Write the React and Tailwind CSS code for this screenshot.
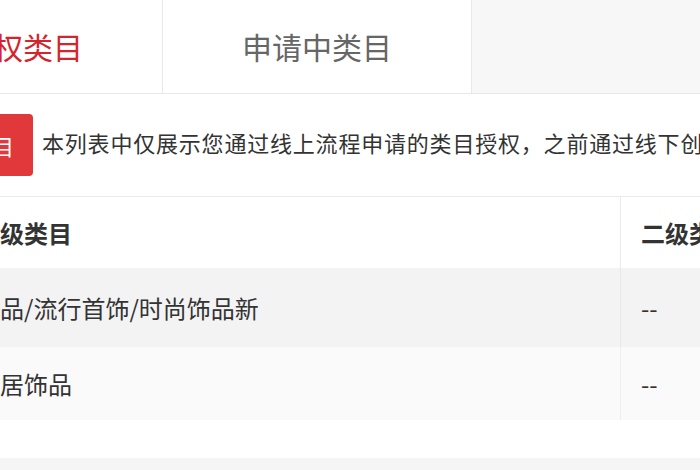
export default function App() {
  const font = { fontFamily: '"Microsoft YaHei", "Noto Sans CJK SC", "Noto Sans", sans-serif' };
  return (
    <div className="w-[700px] h-[470px] overflow-hidden bg-white" style={font}>
      <div className="-ml-[146px] w-[1100px] flex flex-col">
        {/* Tabs */}
        <div className="flex h-[94px] border-b border-[#e8e8e8]">
          <div className="w-[309px] shrink-0 flex items-center justify-center border-r border-[#e8e8e8] bg-white text-[30px] text-[#d4242c]">
            已授权类目
          </div>
          <div className="w-[309px] shrink-0 flex items-center justify-center border-r border-[#e8e8e8] bg-white text-[30px] text-[#666666]">
            申请中类目
          </div>
          <div className="flex-1 bg-[#f7f7f7]"></div>
        </div>
        {/* Notice */}
        <div className="flex items-center h-[103px] border-b border-[#ebebeb] pl-[97px]">
          <div className="h-[62px] px-[19px] flex items-center rounded-[4px] bg-[#e1393b] text-white text-[22px] shrink-0">
            类目
          </div>
          <div className="ml-[9px] text-[22px] tracking-[0.8px] text-[#333333] whitespace-nowrap -mt-[6px]">
            本列表中仅展示您通过线上流程申请的类目授权，之前通过线下创建的类目授权请联系运营
          </div>
        </div>
        {/* Table */}
        <div className="ml-[102px] flex flex-col">
          <div className="flex h-[71px] bg-white">
            <div className="w-[665px] shrink-0 flex items-center pl-[20px] text-[24px] font-bold text-[#333333] border-r border-[#ebebeb]">
              一级类目
            </div>
            <div className="flex-1 flex items-center pl-[20px] text-[24px] font-bold text-[#333333]">
              二级类目
            </div>
          </div>
          <div className="flex h-[79px] bg-[#f3f3f3]">
            <div className="w-[665px] shrink-0 flex items-center pl-[20px] text-[24px] text-[#333333] border-r border-[#e9e9e9]">
              饰品/流行首饰/时尚饰品新
            </div>
            <div className="flex-1 flex items-center pl-[20px] text-[24px] text-[#333333]">
              --
            </div>
          </div>
          <div className="flex h-[73px] bg-[#fafafa]">
            <div className="w-[665px] shrink-0 flex items-center pl-[20px] text-[24px] text-[#333333] border-r border-[#eeeeee]">
              家居饰品
            </div>
            <div className="flex-1 flex items-center pl-[20px] text-[24px] text-[#333333]">
              --
            </div>
          </div>
        </div>
        <div className="h-[38px] bg-white"></div>
        <div className="h-[40px] bg-[#f5f5f5]"></div>
      </div>
    </div>
  );
}
